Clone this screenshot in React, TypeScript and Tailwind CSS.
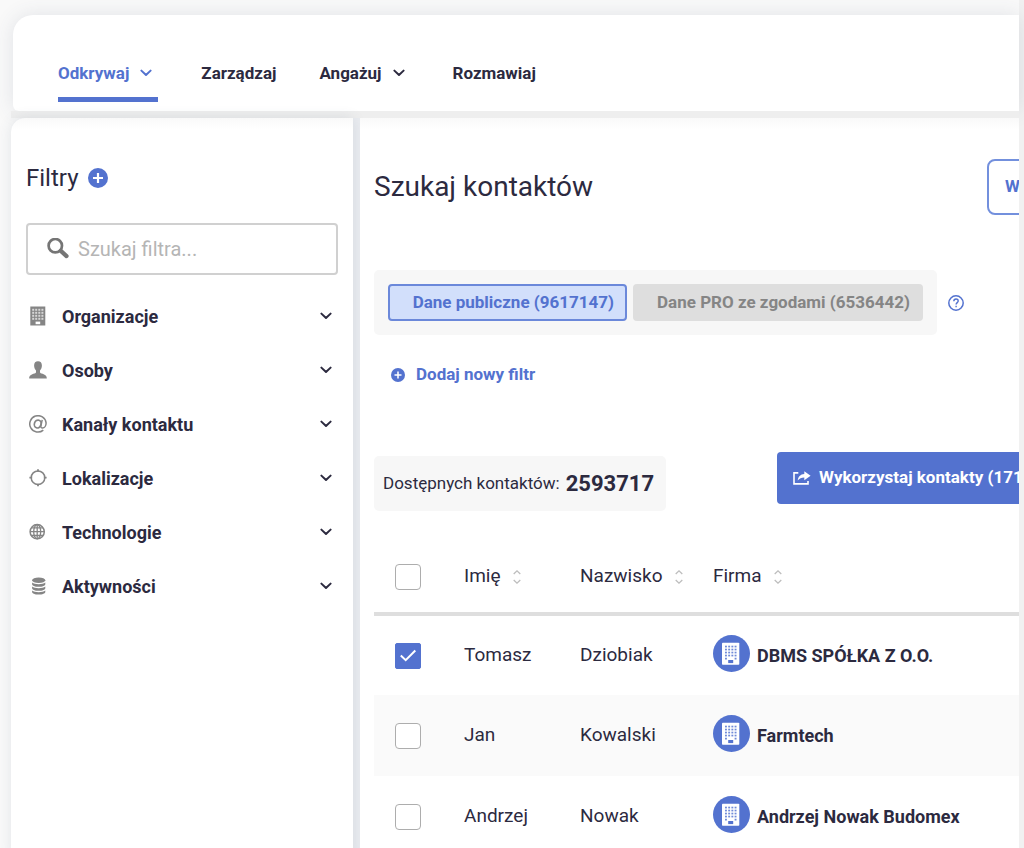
import { useState } from 'react';
import type { ReactNode } from 'react';

function Chevron({ className }: { className?: string }) {
  return (
    <svg viewBox="0 0 12 8" className={className} fill="none" stroke="currentColor" strokeWidth="2" strokeLinecap="round" strokeLinejoin="round" aria-hidden="true">
      <path d="M1.4 1.6 L6 6 L10.6 1.6" />
    </svg>
  );
}

function PlusDisc({ className }: { className?: string }) {
  return (
    <svg viewBox="0 0 20 20" className={className} aria-hidden="true">
      <circle cx="10" cy="10" r="10" fill="#5372cf" />
      <path d="M10 5v10M5 10h10" stroke="#fff" strokeWidth="2.2" fill="none" />
    </svg>
  );
}

function BuildingIcon() {
  return (
    <svg viewBox="0 0 18 20" className="h-5 w-[18px]" aria-hidden="true">
      <path d="M1.3 0.5h15v19h-15z" fill="#858585" />
      {[2.8, 5.8, 8.8, 11.8].map((y) =>
        [3.2, 6.2, 9.3, 12.4].map((x) => <rect key={`${x}-${y}`} x={x} y={y} width="2" height="2" fill="#d6d6d6" />),
      )}
      <path d="M6.6 15.6h4.6v2.6H6.6z" fill="#fff" />
    </svg>
  );
}

function PersonIcon() {
  return (
    <svg viewBox="0 0 18 18" className="h-[18px] w-[18px]" fill="#858585" aria-hidden="true">
      <path d="M9 .3c2.500 0 3.900 1.600 3.900 4.100 0 2.200-.9 4-1.900 5v1.700c0 .8.500 1.200 1.500 1.500 3.200 1 5.300 1.700 5.300 4.900H.2c0-3.200 2.100-3.900 5.300-4.900 1-.3 1.500-.7 1.500-1.500V9.400C6 8.400 5.100 6.600 5.100 4.400 5.100 1.900 6.500.3 9 .3z" />
    </svg>
  );
}

function AtIcon() {
  return (
    <svg viewBox="0 0 18 18" className="h-[18px] w-[18px]" fill="none" stroke="#858585" aria-hidden="true">
      <path d="M14.300 15.100A8.200 8.200 0 1 1 17.100 7.900c0 3-1.700 5-3.600 5-1.300 0-1.900-.8-1.600-2.100l1.300-5.900" strokeWidth="1.500" />
      <ellipse cx="8.700" cy="9" rx="3.300" ry="4" transform="rotate(18 8.700 9)" strokeWidth="1.700" />
    </svg>
  );
}

function TargetIcon() {
  return (
    <svg viewBox="0 0 18 18" className="h-[18px] w-[18px]" fill="none" stroke="#858585" strokeWidth="1.500" aria-hidden="true">
      <circle cx="9" cy="8.700" r="6.800" />
      <path d="M9 0.300v2.500M9 14.800v2.500M.4 8.700h2.800M14.800 8.700h2.800" strokeWidth="1.800" />
    </svg>
  );
}

function GlobeIcon() {
  return (
    <svg viewBox="0 0 18 18" className="h-[18px] w-[18px]" fill="none" stroke="#858585" strokeWidth="1.500" aria-hidden="true">
      <circle cx="8.200" cy="8.700" r="7.100" />
      <ellipse cx="8.200" cy="8.700" rx="3.500" ry="7.100" strokeWidth="1.300" />
      <path d="M8.200 1.600v14.200M1.200 8.700h14M2.300 4.900h11.800M2.300 12.500h11.800" strokeWidth="1.300" />
    </svg>
  );
}

function DatabaseIcon() {
  return (
    <svg viewBox="0 0 18 18" className="h-[18px] w-[18px]" fill="#858585" aria-hidden="true">
      <ellipse cx="9.700" cy="3.200" rx="6.600" ry="2.800" />
      <path d="M3.100 5.600c1.400 1.100 3.800 1.600 6.600 1.600s5.200-.5 6.600-1.600v1.600c0 1.500-3 2.600-6.600 2.600S3.100 8.700 3.100 7.200z" />
      <path d="M3.100 9.600c1.400 1.100 3.800 1.600 6.600 1.600s5.200-.5 6.600-1.600v1.600c0 1.500-3 2.600-6.600 2.600s-6.600-1.100-6.600-2.600z" />
      <path d="M3.100 13.600c1.400 1.100 3.800 1.600 6.600 1.600s5.200-.5 6.600-1.600v1.300c0 1.500-3 2.600-6.600 2.600s-6.600-1.100-6.600-2.600z" />
    </svg>
  );
}

function CompanyBadge() {
  return (
    <svg viewBox="0 0 37 37" className="h-[37px] w-[37px] shrink-0" aria-hidden="true">
      <circle cx="18.500" cy="18.500" r="18.500" fill="#5372cf" />
      <rect x="9" y="7.700" width="17.300" height="22" rx="0.800" fill="#fff" />
      {[10.7, 13.7, 16.7, 19.7].map((y) =>
        [12, 15.2, 18.4, 21.6].map((x) => <rect key={`${x}-${y}`} x={x} y={y} width="1.900" height="1.700" fill="#6f8ad8" />),
      )}
      <path d="M12 22.700h1.900v1.700H12zM21.600 22.700h1.900v1.700h-1.900z" fill="#6f8ad8" />
      <path d="M15.200 25h5v3.100h-5z" fill="#5372cf" />
    </svg>
  );
}

function SearchIcon() {
  return (
    <svg viewBox="0 0 22 22" className="h-[22px] w-[22px] shrink-0" fill="none" stroke="#757575" aria-hidden="true">
      <circle cx="8.300" cy="7.700" r="6.700" strokeWidth="2.700" />
      <path d="M13.800 12.900l5.700 5.200" strokeWidth="4.200" strokeLinecap="round" />
    </svg>
  );
}

function ShareIcon() {
  return (
    <svg viewBox="0 0 18 14" className="h-[14px] w-[18px] shrink-0" aria-hidden="true">
      <path d="M5.300 1.900H1v11h14V9.900" fill="none" stroke="#fff" strokeWidth="1.600" />
      <path d="M11.300 0.200l6.300 4.500-6.300 4.500V6.500c-2.900 0-4.900.8-6.600 3.100.4-4 2.700-6.500 6.600-6.700z" fill="#fff" />
    </svg>
  );
}

function SortIcon() {
  return (
    <svg viewBox="0 0 8 14" className="h-[14px] w-2" fill="none" stroke="#bdbdbd" strokeWidth="1.300" aria-hidden="true">
      <path d="M.7 4L4 .9 7.300 4M.7 10L4 13.100 7.300 10" />
    </svg>
  );
}

const filters: { name: string; icon: ReactNode }[] = [
  { name: 'Organizacje', icon: <BuildingIcon /> },
  { name: 'Osoby', icon: <PersonIcon /> },
  { name: 'Kanały kontaktu', icon: <AtIcon /> },
  { name: 'Lokalizacje', icon: <TargetIcon /> },
  { name: 'Technologie', icon: <GlobeIcon /> },
  { name: 'Aktywności', icon: <DatabaseIcon /> },
];

const contacts = [
  { first: 'Tomasz', last: 'Dziobiak', company: 'DBMS SPÓŁKA Z O.O.' },
  { first: 'Jan', last: 'Kowalski', company: 'Farmtech' },
  { first: 'Andrzej', last: 'Nowak', company: 'Andrzej Nowak Budomex' },
];

function Check({ label, checked, onChange }: { label: string; checked: boolean; onChange: () => void }) {
  return (
    <label className="grid h-[26px] w-[26px]">
      <input
        type="checkbox"
        aria-label={label}
        checked={checked}
        onChange={onChange}
        className="peer col-start-1 row-start-1 h-[26px] w-[26px] appearance-none rounded-[4px] border border-[#adadad] bg-white checked:rounded-[2px] checked:border-[#5372cf] checked:bg-[#5372cf]"
      />
      <svg viewBox="0 0 26 26" className="pointer-events-none invisible col-start-1 row-start-1 peer-checked:visible" fill="none" stroke="#fff" strokeWidth="2" aria-hidden="true">
        <path d="M5.800 12.600l4.900 4.600L20.300 7.500" />
      </svg>
    </label>
  );
}

function Nav() {
  return (
    <header className="flex h-24 items-start rounded-tl-[20px] rounded-bl-[6px] bg-white pt-[46px] pl-[45px] shadow-[0_0_20px_rgba(60,80,110,0.13)]">
      <nav className="flex items-start text-[17px] leading-6 font-bold">
        <a href="#odkrywaj" className="mr-[43px] flex items-center gap-[11px] border-b-[5px] border-[#5372cf] pr-[6px] pb-3 text-[#5372cf]">
          Odkrywaj <Chevron className="h-2 w-3" />
        </a>
        <a href="#zarzadzaj" className="mr-[43px]">Zarządzaj</a>
        <a href="#angazuj" className="mr-12 flex items-center gap-[11px]">
          Angażuj <Chevron className="h-2 w-3" />
        </a>
        <a href="#rozmawiaj">Rozmawiaj</a>
      </nav>
    </header>
  );
}

function Sidebar() {
  return (
    <aside className="w-[342px] shrink-0 rounded-tl-[14px] bg-white bg-linear-to-b from-[#f9f9f9] to-white to-[12px] px-[15px] pt-11 shadow-[0_0_14px_rgba(60,80,110,0.12)]">
      <div className="flex items-center gap-[9px]">
        <h2 className="text-[24px] leading-8">Filtry</h2>
        <button aria-label="Dodaj filtr"><PlusDisc className="block h-5 w-5" /></button>
      </div>
      <label className="mt-[29px] flex h-[52px] items-center gap-[9px] rounded-[4px] border-2 border-[#d0d0d0] pl-[19px]">
        <SearchIcon />
        <input type="text" aria-label="Szukaj filtra" placeholder="Szukaj filtra..." className="min-w-0 flex-1 text-[20px] outline-none placeholder:text-[#b5b5b5]" />
      </label>
      <ul className="mt-[14px]">
        {filters.map((f) => (
          <li key={f.name}>
            <button className="flex h-[54px] w-full items-center pr-[6px] pl-[3px] text-left text-[18px] font-bold">
              <span className="flex w-[33px]">{f.icon}</span>
              <span className="flex-1">{f.name}</span>
              <Chevron className="h-2 w-3" />
            </button>
          </li>
        ))}
      </ul>
    </aside>
  );
}

function ContactTable() {
  const [picked, setPicked] = useState<string[]>(['Tomasz']);
  const toggle = (n: string) => setPicked((p) => (p.includes(n) ? p.filter((x) => x !== n) : [...p, n]));
  const all = picked.length === contacts.length;
  return (
    <table className="mt-[30px] w-full table-fixed text-left text-[19px]">
      <colgroup>
        <col className="w-[90px]" />
        <col className="w-[116px]" />
        <col className="w-[133px]" />
        <col />
      </colgroup>
      <thead>
        <tr className="h-[73px] border-b-4 border-[#dedede]">
          <th className="pl-[21px]">
            <Check label="Zaznacz wszystkie" checked={all} onChange={() => setPicked(all ? [] : contacts.map((c) => c.first))} />
          </th>
          {['Imię', 'Nazwisko', 'Firma'].map((h) => (
            <th key={h} className="font-normal">
              <button className="flex items-center gap-3">{h} <SortIcon /></button>
            </th>
          ))}
        </tr>
      </thead>
      <tbody>
        {contacts.map((c) => (
          <tr key={c.first} className="h-[81px] even:bg-[#fafafa]">
            <td className="pl-[21px]">
              <Check label={`${c.first} ${c.last}`} checked={picked.includes(c.first)} onChange={() => toggle(c.first)} />
            </td>
            <td>{c.first}</td>
            <td>{c.last}</td>
            <td>
              <div className="flex items-center gap-[7px] pb-1 text-[18px] font-bold whitespace-nowrap">
                <CompanyBadge />
                <span className="pt-1">{c.company}</span>
              </div>
            </td>
          </tr>
        ))}
      </tbody>
    </table>
  );
}

function Main() {
  return (
    <main className="min-w-0 flex-1 overflow-hidden bg-white bg-linear-to-b from-[#f9f9f9] to-white to-[12px] pt-[41px] pl-[14px]">
      <div className="flex items-center justify-between">
        <h1 className="text-[28px] leading-10">Szukaj kontaktów</h1>
        <div className="w-8 overflow-hidden">
          <button className="h-14 w-40 rounded-[8px] border-2 border-[#7390dd] pl-4 text-left text-[17px] font-bold text-[#5372cf]">Wyczyść</button>
        </div>
      </div>
      <div className="mt-[55px] flex items-center gap-[11px]">
        <div className="flex gap-[6px] rounded-[5px] bg-[#f7f7f7] p-[14px] text-[17px] font-bold">
          <button className="h-[37px] w-[239px] rounded-[4px] border-2 border-[#6b88da] bg-[#d2dffb] pr-[11px] text-right whitespace-nowrap text-[#5372cf]">Dane publiczne (9617147)</button>
          <button className="h-[37px] w-[290px] rounded-[4px] bg-[#dedede] pr-[13px] text-right whitespace-nowrap text-[#858585]">Dane PRO ze zgodami (6536442)</button>
        </div>
        <button aria-label="Pomoc">
          <svg viewBox="0 0 16 16" className="block h-4 w-4" fill="none" stroke="#5372cf" aria-hidden="true">
            <circle cx="8" cy="8" r="7.200" strokeWidth="1.500" />
            <path d="M5.800 6.200C5.900 4.700 6.800 4 8 4s2.200.8 2.200 2c0 1.600-2.100 1.700-2.100 3.500M8.100 10.700v1.500" strokeWidth="1.400" />
          </svg>
        </button>
      </div>
      <button className="mt-7 ml-[17px] flex h-6 items-center gap-[11px] text-[17px] font-bold text-[#5372cf]">
        <PlusDisc className="h-[14px] w-[14px]" /> Dodaj nowy filtr
      </button>
      <div className="mt-[65px] flex items-start justify-between">
        <p className="mt-1 flex h-[55px] items-center gap-[6px] rounded-[5px] bg-[#f7f7f7] pr-3 pl-[9px] text-[17px] whitespace-nowrap">
          Dostępnych kontaktów: <strong className="text-[22px] font-bold">2593717</strong>
        </p>
        <div className="w-[242px] overflow-hidden">
          <button className="flex h-[52px] w-[280px] items-center gap-2 rounded-[4px] bg-[#5372cf] pl-4 text-[17px] font-bold whitespace-nowrap text-white">
            <ShareIcon /> Wykorzystaj kontakty (1714)
          </button>
        </div>
      </div>
      <ContactTable />
    </main>
  );
}

export default function App() {
  return (
    <div className="min-h-screen overflow-hidden bg-[#f9f9f9] font-['Roboto','Liberation_Sans',sans-serif] text-[#2c2a3f]">
      <div className="flex min-h-screen flex-col border-r-[5px] border-[#f1f1f1] pt-[15px]">
        <div className="pl-[13px]"><Nav /></div>
        <div className="ml-[11px] h-[7px] bg-[#eeeeee]" />
        <div className="ml-[11px] flex flex-1 gap-[7px] rounded-tl-[14px] bg-[#eaecf0]">
          <Sidebar />
          <Main />
        </div>
      </div>
    </div>
  );
}
